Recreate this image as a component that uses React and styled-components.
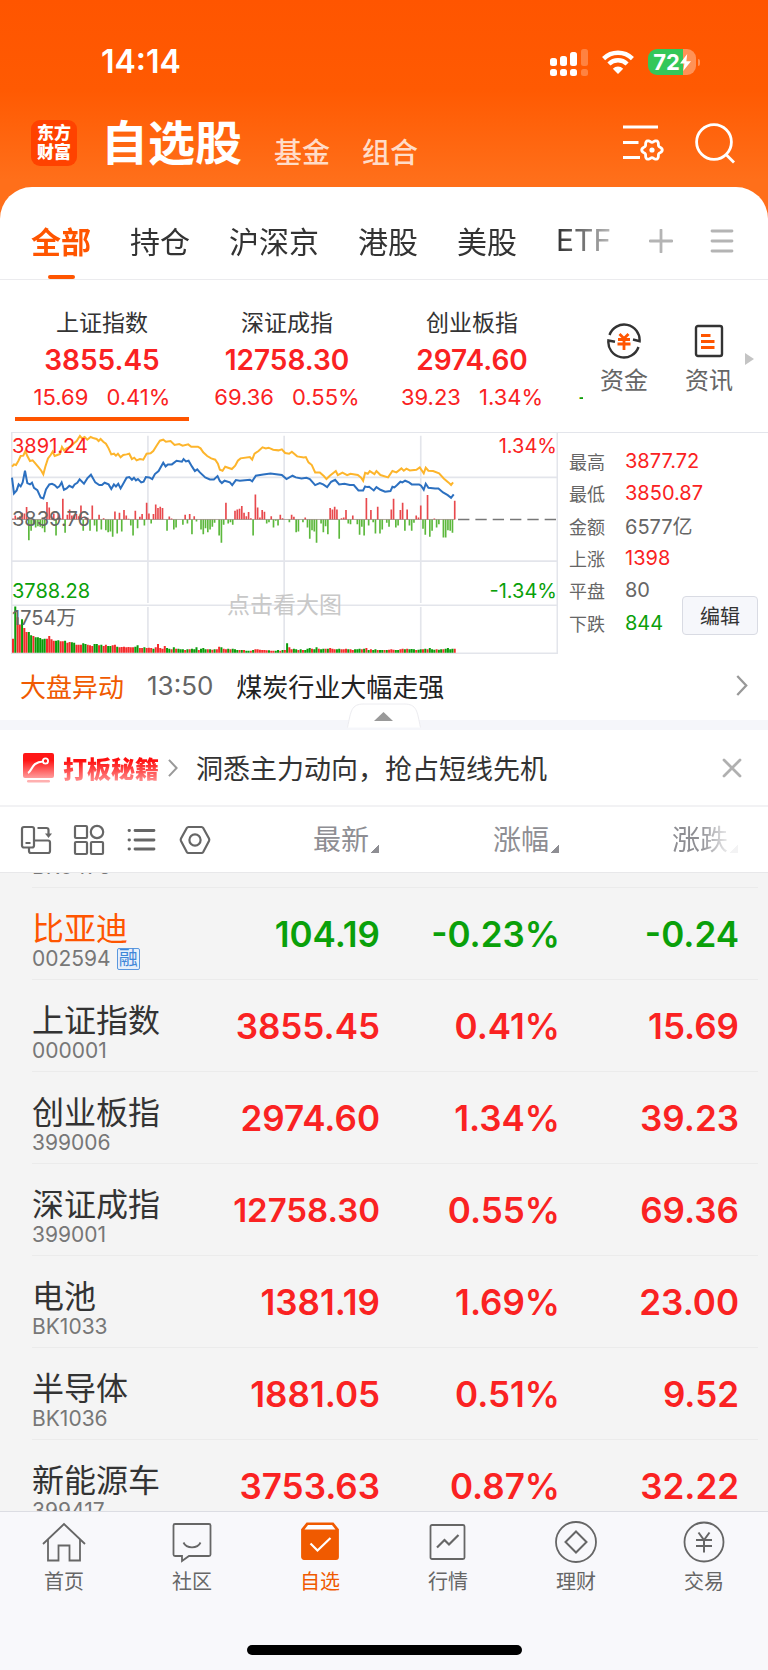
import * as React from 'react';
import styled, { createGlobalStyle, css } from 'styled-components';

const colors = {
    brand: '#ff5500',
    nav: '#f05a00',
    up: '#fa2222',
    down: '#0aa00a',
    text: '#333333',
    grey: '#666666',
    light: '#8e8e93',
    line: '#e3e5eb',
    list: '#f4f4f4',
};

const trendColor = {
    up: colors.up,
    down: colors.down,
    flat: colors.grey,
};

const GlobalStyle = createGlobalStyle`
    * {
        box-sizing: border-box;
    }

    body {
        margin: 0;
        font-family: Inter, 'Noto Sans CJK SC', sans-serif;
        color: ${ colors.text };
    }

    button {
        padding: 0;
        border: 0;
        background: none;
        color: inherit;
        font: inherit;
        cursor: pointer;
    }

    h1, p, ul, dl, dd {
        margin: 0;
        padding: 0;
        list-style: none;
    }

    svg {
        display: block;
        flex: none;
    }
`;

const Screen = styled.div`
    display: flex;
    flex-direction: column;
    height: 100vh;
    background: linear-gradient(#ff5500 0, #ff5a02 90px, #ff6f1a 180px, #ff6f1a 100%);
`;

/* ---------- status bar ---------- */

const StatusBar = styled.div`
    display: flex;
    align-items: center;
    justify-content: space-between;
    padding: 44px 68px 0 101px;
    line-height: 36px;
    font-size: 32px;
    font-weight: 600;
    color: #fff;
`;

const StatusIcons = styled.div`
    display: flex;
    align-items: center;
    gap: 14px;
`;

const SignalIcon = () =>
    <svg width="38" height="27" viewBox="0 0 38 27" fill="#fff">
        <rect x="0" y="9" width="7" height="8" rx="2.5" />
        <rect x="10" y="7" width="7" height="10" rx="2.5" />
        <rect x="20" y="3" width="7" height="14" rx="2.5" />
        <rect x="31" y="0" width="7" height="17" rx="2.5" opacity=".25" />
        <rect x="0" y="20" width="7" height="7" rx="2.5" />
        <rect x="10" y="20" width="7" height="7" rx="2.5" />
        <rect x="20" y="20" width="7" height="7" rx="2.5" />
        <rect x="31" y="20" width="7" height="7" rx="2.5" opacity=".25" />
    </svg>;

const WifiIcon = () =>
    <svg width="32" height="24" viewBox="0 0 32 24" fill="none" stroke="#fff" strokeWidth="4.4">
        <path d="M1.6 8.6a20.6 20.6 0 0 1 28.8 0" />
        <path d="M6.9 14a13 13 0 0 1 18.2 0" />
        <path d="M16 24l-5.2-5.3a7.4 7.4 0 0 1 10.4 0z" fill="#fff" stroke="none" />
    </svg>;

const Battery = styled.div`
    display: flex;
    align-items: center;
    gap: 2px;

    &:after {
        content: '';
        width: 2px;
        height: 7px;
        border-radius: 0 3px 3px 0;
        background: rgba(255, 255, 255, .35);
    }
`;

const BatteryBody = styled.div`
    display: flex;
    align-items: center;
    justify-content: center;
    width: 48px;
    height: 26px;
    border-radius: 9px;
    background: linear-gradient(90deg, #34c759 72%, #ff9257 72%);
    font-size: 22px;
    font-weight: 700;
`;

const BoltIcon = () =>
    <svg width="11" height="17" viewBox="0 0 11 17" fill="#fff">
        <path d="M7.2 0L0 9.4h4.4L3.2 17 11 7.2H6.4z" />
    </svg>;

/* ---------- title bar ---------- */

const TitleBar = styled.header`
    display: flex;
    align-items: center;
    height: 107px;
    padding: 33px 32px 14px 31px;
    color: #fff;
`;

const Logo = styled.div`
    display: grid;
    place-content: center;
    width: 46px;
    height: 46px;
    border-radius: 9px;
    background: #ff4200;
    font-size: 17px;
    font-weight: 900;
    line-height: 19px;
`;

const Sections = styled.nav`
    display: flex;
    flex: 1;
    align-items: flex-end;
    gap: 32px;
    margin-left: 24px;
`;

const SectionTitle = styled.h1`
    font-size: 47px;
    font-weight: 700;
    line-height: 60px;
`;

const SectionLink = styled.button`
    font-size: 28px;
    font-weight: 500;
    line-height: 40px;
    color: #ffdcc8;
`;

const TitleActions = styled.div`
    display: flex;
    align-items: center;
    gap: 31px;
`;

/* wavy outline with six lobes, centred on the lower lines */
const gearPoints = Array.from({ length: 72 }, (_, step) => {
    const angle = step * Math.PI / 36;
    const radius = 9 + 1.3 * Math.cos(6 * angle);
    return `${ (30 + radius * Math.cos(angle)).toFixed(2) },${ (26 + radius * Math.sin(angle)).toFixed(2) }`;
}).join(' ');

const FilterIcon = () =>
    <svg width="42" height="38" viewBox="0 0 42 38" fill="none" stroke="#fff" strokeWidth="2.8">
        <path d="M1 3h35M1 18.500h15.500M1 33.500h17" />
        <polygon points={ gearPoints } />
        <circle cx="30" cy="26" r="2.600" fill="#fff" stroke="none" />
    </svg>;

const SearchIcon = () =>
    <svg width="41" height="41" viewBox="0 0 41 41" fill="none" stroke="#fff" strokeWidth="2.8">
        <circle cx="19" cy="19" r="17.400" />
        <path d="M31 31.500l8 8" />
    </svg>;

/* ---------- watch list tabs ---------- */

const Sheet = styled.main`
    display: flex;
    flex: 1;
    flex-direction: column;
    min-height: 0;
    border-radius: 32px 32px 0 0;
    background: #fff;
    overflow: hidden;
`;

const TabBar = styled.div`
    display: flex;
    align-items: stretch;
    height: 93px;
    border-bottom: 1px solid #ebebee;
    padding: 0 34px 0 31px;
`;

const Tabs = styled.nav`
    display: flex;
    flex: 1;
    gap: 39px;
    min-width: 0;
    overflow: hidden;
    mask-image: linear-gradient(90deg, #000 calc(100% - 64px), rgba(0, 0, 0, .2));
`;

const Tab = styled.button`
    position: relative;
    flex: none;
    padding-top: 13px;
    font-size: 30px;
    white-space: nowrap;

    ${ props => props.$active && css`
        color: ${ colors.brand };
        font-weight: 700;

        &:after {
            content: '';
            position: absolute;
            bottom: 0;
            left: calc(50% - 13px);
            width: 27px;
            height: 4px;
            border-radius: 2px;
            background: ${ colors.brand };
        }
    ` }
`;

const TabActions = styled.div`
    display: flex;
    align-items: center;
    gap: 37px;
    padding: 15px 0 0 27px;
    color: #b4b4b4;
`;

const PlusIcon = () =>
    <svg width="24" height="24" viewBox="0 0 24 24" stroke="currentColor" strokeWidth="2.800" strokeLinecap="round">
        <path d="M12 1v22M1 12h22" />
    </svg>;

const MenuIcon = () =>
    <svg width="24" height="24" viewBox="0 0 24 24" stroke="currentColor" strokeWidth="2.800" strokeLinecap="round">
        <path d="M2 2h20M2 12h20M2 22h20" />
    </svg>;

/* ---------- index cards ---------- */

const IndexBar = styled.section`
    display: flex;
    padding: 0 14px 11px 15px;
`;

const IndexList = styled.div`
    display: grid;
    flex: 1;
    grid-template-columns: repeat(3, 1fr) 13px;
    gap: 11px;
    overflow: hidden;
`;

const IndexCard = styled.button`
    display: flex;
    flex-direction: column;
    align-items: center;
    padding: 28px 0 5px;
    border-bottom: 4px solid ${ props => props.$active ? colors.brand : 'transparent' };
    line-height: 30px;
    white-space: nowrap;
`;

const IndexName = styled.span`
    font-size: 23px;
`;

const IndexValue = styled.span`
    font-size: 28px;
    font-weight: 600;
    line-height: 44px;
    color: ${ props => trendColor[props.$trend] };
`;

const IndexChange = styled.span`
    display: flex;
    gap: 18px;
    font-size: 22px;
    color: ${ props => trendColor[props.$trend] };
`;

const IndexPeek = styled.div`
    align-self: end;
    padding: 0 0 9px 8px;
    overflow: hidden;
    font-size: 22px;
    line-height: 30px;
    color: ${ colors.down };
`;

const Shortcuts = styled.div`
    display: flex;
    align-items: center;
    gap: 15px;
    margin-left: 6px;
`;

const Shortcut = styled.button`
    display: flex;
    flex-direction: column;
    align-items: center;
    gap: 5px;
    width: 70px;
    padding-top: 20px;
    font-size: 24px;
    line-height: 34px;
    color: ${ colors.grey };
`;

const ShortcutArrow = styled.i`
    margin: 16px 0 0 -14px;
    border: solid transparent;
    border-width: 6px 0 6px 9px;
    border-left-color: #c4c4c4;
`;

const FundsIcon = () =>
    <svg width="36" height="36" viewBox="0 0 36 36" fill="none" strokeWidth="2.400">
        <g stroke="#333">
            <path d="M3.500 12A15.500 15.500 0 0 1 33.600 18.200L27 16.500" />
            <path d="M32.500 24A15.500 15.500 0 0 1 2.400 17.500L9 18.800" />
        </g>
        <path d="M13.500 11l4.500 4.500 4.500-4.500M12 16.500h12M11.500 21h13M18 15.500V27" stroke={ colors.brand } strokeWidth="2.800" />
    </svg>;

const NewsIcon = () =>
    <svg width="30" height="36" viewBox="0 0 30 36" fill="none" strokeWidth="2.400">
        <rect x="2" y="3" width="26" height="30" rx="2" stroke="#333" />
        <path d="M7 12.500h9.500M7 18.500h13.500M7 24.500h13.500" stroke={ colors.brand } strokeWidth="2.800" />
    </svg>;

/* ---------- minute chart ---------- */

const ChartPanel = styled.section`
    position: relative;
    display: flex;
    height: 222px;
    margin-left: 11px;
    border-top: 1px solid ${ colors.line };
`;

const ChartArea = styled.div`
    position: relative;
    flex: 1;

    & > svg {
        width: 100%;
        height: 100%;
    }
`;

const ChartLabel = styled.span`
    position: absolute;
    top: ${ props => props.$top }px;
    ${ props => props.$right ? 'right: 1px' : 'left: 1px' };
    font-size: 20px;
    line-height: 24px;
    color: ${ props => props.$color };
`;

const ChartHint = styled(ChartLabel)`
    right: 0;
    left: 0;
    text-align: center;
    font-size: 23px;
`;

const Stats = styled.dl`
    display: grid;
    grid-auto-rows: 1fr;
    width: 210px;
    padding: 12px 0 15px 11px;
`;

const Stat = styled.div`
    display: flex;
    align-items: center;
    gap: 20px;
    color: ${ colors.grey };

    & dt {
        font-size: 18px;
    }

    & dd {
        font-size: 20px;
        color: ${ props => trendColor[props.$trend] };
    }
`;

const EditButton = styled.button`
    position: absolute;
    right: 10px;
    bottom: 19px;
    width: 76px;
    height: 39px;
    border: 1px solid #d9dbe3;
    border-radius: 4px;
    background: #f6f7fb;
    font-size: 20px;
`;

const priceLine = [
    36,158, 42,205, 50,196, 56,178, 62,184, 68,172, 75,137, 82,174, 90,178, 96,173, 102,188, 112,195,
    122,217, 130,220, 138,193, 148,178, 156,176, 164,180, 172,188, 178,184, 185,172, 192,194, 200,190,
    208,182, 218,187, 224,178, 232,173, 239,163, 252,176, 262,160, 273,149, 286,172, 298,180, 306,180,
    314,173, 326,178, 334,192, 342,178, 348,184, 355,176, 362,190, 372,172, 380,158, 388,156, 396,164,
    402,158, 408,166, 414,162, 424,172, 431,170, 438,156, 448,157, 457,162, 465,147, 476,138, 490,113,
    497,124, 504,118, 516,118, 530,107, 546,110, 551,102, 558,109, 566,107, 576,124, 585,138, 592,133,
    600,142, 616,157, 630,163, 642,163, 653,153, 660,168, 666,174, 674,167, 690,172, 697,180, 708,165,
    720,167, 750,164, 757,169, 768,152, 790,148, 812,145, 846,150, 860,162, 878,152, 888,157, 905,160,
    920,158, 930,162, 946,180, 960,174, 970,178, 982,186, 994,170, 1006,164, 1018,178, 1034,176,
    1050,180, 1062,180, 1076,196, 1090,196, 1096,184, 1102,186, 1108,185, 1122,196, 1130,186, 1142,194,
    1156,200, 1172,198, 1178,185, 1184,187, 1192,180, 1202,170, 1208,172, 1216,167, 1228,172, 1236,178,
    1258,178, 1264,182, 1272,194, 1278,176, 1286,188, 1306,190, 1316,190, 1330,202, 1344,210, 1354,218,
    1362,208,
];

const averageLine = [
    36,125, 42,118, 48,120, 55,108, 62,93, 70,92, 76,78, 82,93, 90,108, 98,106, 106,115, 116,127,
    124,137, 130,148, 136,125, 144,100, 152,90, 158,80, 164,93, 172,90, 180,87, 186,66, 192,76, 200,70,
    212,65, 222,55, 230,48, 240,33, 246,40, 254,36, 262,44, 272,36, 282,40, 290,42, 296,48, 302,42,
    310,50, 318,56, 326,70, 334,88, 342,86, 348,92, 354,86, 362,97, 370,90, 380,88, 388,86, 396,102,
    403,98, 410,106, 420,102, 430,104, 440,86, 452,85, 460,78, 470,62, 480,47, 490,44, 498,50, 512,48,
    524,60, 538,57, 548,62, 565,58, 574,65, 594,65, 602,70, 610,82, 622,93, 634,100, 646,104, 654,116,
    660,134, 668,137, 676,125, 696,132, 706,122, 714,107, 722,100, 750,96, 757,104, 764,86, 776,78,
    788,67, 798,70, 806,68, 820,74, 836,76, 846,73, 856,84, 868,86, 876,80, 892,94, 912,97, 918,96,
    926,112, 936,120, 946,142, 960,142, 972,153, 980,162, 990,152, 1008,138, 1014,150, 1028,143,
    1042,150, 1052,146, 1074,150, 1084,158, 1090,167, 1096,143, 1104,146, 1110,138, 1124,147, 1130,138,
    1142,150, 1165,157, 1178,138, 1190,142, 1205,130, 1212,137, 1220,131, 1230,136, 1250,134, 1260,127,
    1272,145, 1278,128, 1286,137, 1300,138, 1318,145, 1332,160, 1346,172, 1354,180, 1360,172,
];

/* one value a minute, positive is drawn above the base line in red */
const flow = [
    3, 12, 2, 10, 20, 18, 37, -62, -34, -14, -24, -20, -22, -26, -38, 52, 36, 10, 18, -48,
    18, 4, 62, -40, 14, 30, 12, 14, 16, 10, 42, -34, 6, 5, -34, 42, -18, -36, 14, -30,
    4, -32, -38, -36, -52, 24, -42, 20, -36, 28, 12, 2, -18, -48, 26, -26, 8, 16, -18, 50,
    18, -12, 16, 45, 34, 38, 34, 0, -34, 9, 3, -30, -24, 0, 0, -16, 14, -12, 16, -44,
    10, -6, 0, -30, -44, -26, -38, -30, -22, -10, 0, -48, -70, -16, 50, -12, -8, -16, 26, 30,
    32, 40, 20, 10, 22, 4, -48, 75, 36, 6, 28, 23, -12, -8, 10, -24, -4, -18, 14, 4,
    0, 0, -8, 14, 8, -38, -36, 0, -8, 6, -24, -58, -32, -36, -70, 0, -12, -38, -20, -44,
    34, 30, 38, 30, -58, 4, 6, 28, -12, -14, 12, 0, -14, -46, -22, -48, 64, -18, 28, -8,
    -42, 38, -42, -30, 0, -10, -22, 30, 62, -24, -18, 28, 50, -34, 30, -18, -34, -10, 12, 6,
    42, -28, -46, 73, -52, -34, 3, -24, -14, 0, -54, -54, -32, -34, -40, 56,
];

const volume = [
    42, -138, 106, 84, -100, 74, 62, -62, -52, 50, -46, -46, -44, -40, -42, 42, 50, 40, 36, -36,
    -37, 34, 34, -36, 30, 32, -31, -30, 24, 24, 24, -28, -26, 24, 22, 20, -26, -26, 22, -24,
    20, 24, -20, -20, 22, 24, -18, 16, 17, 18, 16, 17, 16, 16, -18, -22, 14, 14, -16, 14,
    15, 14, -12, 16, 26, 14, 12, 20, -14, -12, 10, -16, 12, -12, -10, -10, 8, -10, 10, -12,
    -10, -16, 8, -12, -14, -10, 10, -10, 9, -10, 10, 18, -16, 12, 10, -12, 10, -12, -10, -8,
    8, -8, 8, -6, -6, 6, -8, 10, 10, 9, 8, 8, 7, -7, 6, 6, -6, -8, 6, -8,
    8, -28, 16, 10, -12, -10, 8, -10, 8, -8, -12, -14, 12, -10, -16, 12, -10, -12, 12, -12,
    14, 12, 10, -10, -12, 10, 10, 12, -10, 10, 8, -10, -10, -12, 10, -12, 14, -8, 10, -8,
    -10, 8, -8, -8, 8, -8, 9, 10, 9, -8, -8, 10, 12, -10, 12, -10, -11, -10, 8, -9,
    -10, 10, -12, 10, -14, -10, -9, 10, -9, -10, 10, -12, -14, -10, -12, 12,
];

const barX = index => 37 + index * 6.8;

const toBars = (values, base, withSign) => values.map((value, index) =>
    `M${ barX(index) + 2 } ${ base }v${ withSign ? -value : -Math.abs(value) }`
);

const pick = (bars, values, positive) => bars.filter((bar, index) => values[index] > 0 === positive).join('');

const flowBars = toBars(flow, 283, true);
const volumeBars = toBars(volume, 682, false);

const MinuteChart = () =>
    <svg viewBox="33 24 1642 662" preserveAspectRatio="none" fill="none" role="img" aria-label="上证指数分时图">
        <g stroke={ colors.line } strokeWidth="5">
            <path d="M35 24V686M1673 24V686M444 32V533M853 32V533M1263 32V533M444 545V684M853 545V684M1263 545V684" />
            <path d="M33 157H1675M33 408H1675M33 540H1675M33 684H1675" />
        </g>
        <path d={ pick(flowBars, flow, true) } stroke="#e8494d" strokeWidth="5" />
        <path d={ pick(flowBars, flow, false) } stroke="#5cb83c" strokeWidth="5" />
        <path d="M36 283H1365" stroke="#8a7a70" strokeWidth="2" />
        <path d="M1375 283H1675" stroke="#777" strokeWidth="4" strokeDasharray="34 18" />
        <path d={ pick(volumeBars, volume, true) } stroke="#f42c2c" strokeWidth="6" />
        <path d={ pick(volumeBars, volume, false) } stroke="#0a9c0a" strokeWidth="6" />
        <polyline points={ averageLine.join(' ') } stroke="#fdb52c" strokeWidth="6" />
        <polyline points={ priceLine.join(' ') } stroke="#2c70c0" strokeWidth="6" />
    </svg>;

/* ---------- market news and promo ---------- */

const NewsRow = styled.a`
    display: flex;
    align-items: center;
    gap: 23px;
    height: 66px;
    padding: 0 20px 4px;
    font-size: 26px;
    color: #222;
    text-decoration: none;

    & svg {
        margin-left: auto;
    }
`;

const NewsTag = styled.span`
    color: ${ colors.nav };
`;

const NewsTime = styled.time`
    color: ${ colors.grey };
`;

const ChevronIcon = ({ width, height, color }) =>
    <svg width={ width } height={ height } viewBox="0 0 11 20" fill="none" stroke={ color } strokeWidth="2.200">
        <path d="M1 1L9.500 10 1 19" />
    </svg>;

const Divider = styled.div`
    position: relative;
    height: 10px;
    background: #f5f6fa;
`;

const CollapseButton = styled.button`
    position: absolute;
    bottom: 2px;
    left: calc(50% - 37px);
`;

const CollapseIcon = () =>
    <svg width="74" height="25" viewBox="0 0 74 25">
        <path d="M.500 24.500C4 8 4 1 17 1H57C70 1 70 8 73.500 24.500" fill="#fff" stroke="#ececf0" />
        <path d="M27 18L36.500 9 46 18Z" fill="#999" />
    </svg>;

const Promo = styled.div`
    display: flex;
    align-items: center;
    height: 77px;
    padding: 0 26px 0 23px;
    border-bottom: 2px solid #f2f2f4;
`;

const PromoLink = styled.a`
    display: flex;
    flex: 1;
    align-items: center;
    gap: 9px;
    color: ${ colors.text };
    text-decoration: none;
`;

const PromoTitle = styled.strong`
    background: linear-gradient(#ff0f0f 30%, #ff8585 85%);
    background-clip: text;
    color: transparent;
    font-size: 24px;
    font-weight: 900;
`;

const PromoText = styled.span`
    margin-left: 9px;
    font-size: 27px;
`;

const PromoIcon = () =>
    <svg width="31" height="30" viewBox="0 0 31 30" fill="none">
        <defs>
            <linearGradient id="promo" x2="0" y2="1">
                <stop offset=".3" stopColor="#ff1616" />
                <stop offset="1" stopColor="#ff9c9c" />
            </linearGradient>
        </defs>
        <rect width="31" height="25" rx="2" fill="url(#promo)" />
        <path d="M5 20C9.500 18 8 9 20.500 8.500" stroke="#fff" strokeWidth="2.200" />
        <circle cx="22.500" cy="8" r="2.600" stroke="#fff" strokeWidth="1.800" />
        <rect x="4" y="27" width="23" height="2.600" rx="1.300" fill="#ffb0b0" />
    </svg>;

const CloseIcon = () =>
    <svg width="20" height="20" viewBox="0 0 20 20" stroke="#b0b0b0" strokeWidth="2.800" strokeLinecap="round">
        <path d="M2 2l16 16M18 2L2 18" />
    </svg>;

/* ---------- quotes ---------- */

const quoteColumns = css`
    display: grid;
    grid-template-columns: minmax(0, 1fr) 150px 180px 179px;
    align-items: center;
`;

const QuoteHead = styled.div`
    ${ quoteColumns }
    height: 66px;
    padding: 0 30px 0 20px;
    border-bottom: 1px solid #e8e8ea;
`;

const ViewButtons = styled.div`
    display: flex;
    gap: 20px;
    color: ${ colors.grey };
`;

const SortButton = styled.button`
    display: flex;
    align-items: flex-end;
    justify-content: flex-end;
    gap: 2px;
    font-size: 28px;
    line-height: 40px;
    color: ${ colors.light };
    ${ props => props.$faded && 'mask-image: linear-gradient(90deg, #000 calc(100% - 38px), rgba(0, 0, 0, .1) calc(100% - 8px));' }

    &:after {
        content: '';
        width: 8px;
        height: 8px;
        margin-bottom: 7px;
        background: linear-gradient(135deg, transparent 50%, ${ colors.light } 50%);
    }
`;

const iconProps = {
    width: 33,
    height: 33,
    viewBox: '0 0 33 33',
    fill: 'none',
    stroke: 'currentColor',
    strokeWidth: 2.2,
};

const RotateIcon = () =>
    <svg { ...iconProps }>
        <path d="M9 24.500v3.500a2 2 0 0 0 2 2H28a2 2 0 0 0 2-2V19.500a2 2 0 0 0-2-2H15" />
        <rect x="2" y="4" width="12" height="20.500" rx="2" fill="#fff" />
        <path d="M5.500 20h5M17.500 5h9a2 2 0 0 1 2 2v5.500" />
        <path d="M25 10.500h7l-3.500 4.500z" fill="currentColor" stroke="none" />
    </svg>;

const GridIcon = () =>
    <svg { ...iconProps }>
        <rect x="2" y="3" width="12" height="12" rx="1" />
        <rect x="2" y="19" width="12" height="12" rx="1" />
        <rect x="18" y="19" width="12" height="12" rx="1" />
        <circle cx="24" cy="9" r="6.200" />
    </svg>;

const ListIcon = () =>
    <svg { ...iconProps } strokeWidth="2.800" strokeLinecap="round">
        <path d="M9 7.500H28M9 17H28M9 26H28M3 7.500h.5M3 17h.5M3 26h.5" />
    </svg>;

const HexIcon = () =>
    <svg { ...iconProps } strokeLinejoin="round">
        <path d="M9.500 4H22.500a2 2 0 0 1 1.700 1L30 15.500a3 3 0 0 1 0 2.500L24.200 29a2 2 0 0 1-1.700 1H9.500a2 2 0 0 1-1.700-1L2 18a3 3 0 0 1 0-2.500L7.800 5A2 2 0 0 1 9.500 4Z" />
        <circle cx="16" cy="17" r="5.600" />
    </svg>;

const QuoteList = styled.ul`
    flex: 1;
    min-height: 0;
    padding: 0 10px 0 32px;
    background: ${ colors.list };
    overflow-y: auto;
    scrollbar-width: none;
`;

const QuoteRow = styled.li`
    ${ quoteColumns }
    height: 92px;
    padding-right: 19px;
    border-bottom: 1px solid #ebebeb;
`;

const Stock = styled.div`
    padding-top: 15px;
    white-space: nowrap;
`;

const StockName = styled.p`
    font-size: 32px;
    line-height: 36px;
    color: ${ props => props.$held ? colors.brand : colors.text };
`;

const StockCode = styled.p`
    display: flex;
    align-items: center;
    gap: 6px;
    font-size: 21px;
    line-height: 24px;
    color: #777;
`;

const MarginTag = styled.span`
    padding: 0 1px;
    border: 1px solid #5a97de;
    border-radius: 2px;
    background: #e6f0fb;
    color: #3f86d8;
    font-size: 19px;
    line-height: 20px;
`;

/* long figures step down a size so they stay in their column */
const Figure = styled.span`
    text-align: right;
    font-size: ${ props => props.$long ? 33 : 35 }px;
    font-weight: 600;
    color: ${ props => trendColor[props.$trend] };
`;

/* ---------- bottom navigation ---------- */

const BottomBar = styled.footer`
    display: flex;
    flex-direction: column;
    justify-content: space-between;
    align-items: center;
    height: 159px;
    padding: 9px 0 15px;
    border-top: 1px solid #dcdde3;
    background: #f8f8fb;
`;

const BottomNav = styled.nav`
    display: grid;
    grid-template-columns: repeat(6, 1fr);
    width: 100%;
`;

const NavLink = styled.a`
    display: flex;
    flex-direction: column;
    align-items: center;
    gap: 7px;
    font-size: 20px;
    line-height: 24px;
    color: ${ props => props.$active ? colors.nav : colors.grey };
    text-decoration: none;
`;

const HomeIndicator = styled.div`
    width: 275px;
    height: 10px;
    border-radius: 5px;
    background: #000;
`;

const NavIcon = ({ children }) =>
    <svg width="44" height="42" viewBox="0 0 44 42" fill="none" stroke="currentColor" strokeWidth="1.800">
        { children }
    </svg>;

const navItems = [
    {
        label: '首页',
        icon: <path d="M1 23L22 3l21 20M6 18.500V39.500H16.500V24.500H27.500V39.500H38V18.500" />,
    },
    {
        label: '社区',
        icon: <path d="M5 3H39a1.500 1.500 0 0 1 1.500 1.500V33.500A1.500 1.500 0 0 1 39 35H19l-7 5V35H5a1.500 1.500 0 0 1-1.500-1.500V4.500A1.500 1.500 0 0 1 5 3ZM13.500 21.500C16.500 28 27.500 28 30.500 21.500" />,
    },
    {
        label: '自选',
        active: true,
        icon: <>
            <path d="M9 2.500H35L40 8.500V36a2 2 0 0 1-2 2H6a2 2 0 0 1-2-2V8.500Z" fill="currentColor" />
            <path d="M10 4H34L37.500 8.500H6.500Z" fill="#fff" stroke="none" />
            <path d="M12.500 22.500l7 7L32.500 17" stroke="#fff" strokeWidth="2.200" />
        </>,
    },
    {
        label: '行情',
        icon: <>
            <rect x="4.500" y="4" width="34" height="34" rx="1.500" />
            <path d="M11 26.500l7.500-7.500 4.500 4.500L32.500 14" strokeWidth="2.200" />
        </>,
    },
    {
        label: '理财',
        icon: <>
            <circle cx="22" cy="21" r="20" />
            <path d="M22 10.500L32.500 21 22 31.500 11.500 21Z" strokeWidth="2" />
        </>,
    },
    {
        label: '交易',
        icon: <>
            <circle cx="22" cy="21" r="19.500" />
            <path d="M16.500 11.500L22 19l5.500-7.500M14 19H30M14 25H30M22 19V31.500" strokeWidth="2" />
        </>,
    },
];

/* ---------- data ---------- */

const tabs = ['全部', '持仓', '沪深京', '港股', '美股', 'ETF'];

const indices = [
    { name: '上证指数', value: '3855.45', change: '15.69', percent: '0.41%' },
    { name: '深证成指', value: '12758.30', change: '69.36', percent: '0.55%' },
    { name: '创业板指', value: '2974.60', change: '39.23', percent: '1.34%' },
];

const stats = [
    { label: '最高', value: '3877.72', trend: 'up' },
    { label: '最低', value: '3850.87', trend: 'up' },
    { label: '金额', value: '6577亿', trend: 'flat' },
    { label: '上涨', value: '1398', trend: 'up' },
    { label: '平盘', value: '80', trend: 'flat' },
    { label: '下跌', value: '844', trend: 'down' },
];

const quotes = [
    { name: '银行', code: 'BK0475' },
    { name: '比亚迪', code: '002594', last: '104.19', percent: '-0.23%', change: '-0.24', held: true, margin: true },
    { name: '上证指数', code: '000001', last: '3855.45', percent: '0.41%', change: '15.69' },
    { name: '创业板指', code: '399006', last: '2974.60', percent: '1.34%', change: '39.23' },
    { name: '深证成指', code: '399001', last: '12758.30', percent: '0.55%', change: '69.36' },
    { name: '电池', code: 'BK1033', last: '1381.19', percent: '1.69%', change: '23.00' },
    { name: '半导体', code: 'BK1036', last: '1881.05', percent: '0.51%', change: '9.52' },
    { name: '新能源车', code: '399417', last: '3753.63', percent: '0.87%', change: '32.22' },
];

const LIST_OFFSET = 77;

const Quotes = () => {
    const list = React.useRef(null);

    React.useLayoutEffect(() => {
        list.current.scrollTop = LIST_OFFSET;
    }, []);

    return (
        <QuoteList ref={ list }>
            { quotes.map(({ name, code, last = '', percent, change = '', held, margin }) => {
                const trend = change.startsWith('-') ? 'down' : 'up';
                return (
                    <QuoteRow key={ code }>
                        <Stock>
                            <StockName $held={ held }>{ name }</StockName>
                            <StockCode>
                                { code }
                                { margin && <MarginTag>融</MarginTag> }
                            </StockCode>
                        </Stock>
                        <Figure $trend={ trend } $long={ last.length > 7 }>{ last }</Figure>
                        <Figure $trend={ trend }>{ percent }</Figure>
                        <Figure $trend={ trend }>{ change }</Figure>
                    </QuoteRow>
                );
            }) }
        </QuoteList>
    );
};

export default function App() {
    const [tab, setTab] = React.useState(tabs[0]);
    const [index, setIndex] = React.useState(indices[0].name);

    return (
        <Screen>
            <GlobalStyle />
            <StatusBar>
                <span>14:14</span>
                <StatusIcons>
                    <SignalIcon />
                    <WifiIcon />
                    <Battery>
                        <BatteryBody>72<BoltIcon /></BatteryBody>
                    </Battery>
                </StatusIcons>
            </StatusBar>
            <TitleBar>
                <Logo><span>东方</span><span>财富</span></Logo>
                <Sections>
                    <SectionTitle>自选股</SectionTitle>
                    <SectionLink>基金</SectionLink>
                    <SectionLink>组合</SectionLink>
                </Sections>
                <TitleActions>
                    <button aria-label="设置"><FilterIcon /></button>
                    <button aria-label="搜索"><SearchIcon /></button>
                </TitleActions>
            </TitleBar>
            <Sheet>
                <TabBar>
                    <Tabs>
                        { tabs.map(name =>
                            <Tab key={ name } $active={ name === tab } onClick={ () => setTab(name) }>{ name }</Tab>
                        ) }
                    </Tabs>
                    <TabActions>
                        <button aria-label="添加"><PlusIcon /></button>
                        <button aria-label="分组"><MenuIcon /></button>
                    </TabActions>
                </TabBar>
                <IndexBar>
                    <IndexList>
                        { indices.map(({ name, value, change, percent }) =>
                            <IndexCard key={ name } $active={ name === index } onClick={ () => setIndex(name) }>
                                <IndexName>{ name }</IndexName>
                                <IndexValue $trend="up">{ value }</IndexValue>
                                <IndexChange $trend="up">
                                    <span>{ change }</span>
                                    <span>{ percent }</span>
                                </IndexChange>
                            </IndexCard>
                        ) }
                        <IndexPeek>-</IndexPeek>
                    </IndexList>
                    <Shortcuts>
                        <Shortcut><FundsIcon />资金</Shortcut>
                        <Shortcut><NewsIcon />资讯</Shortcut>
                        <ShortcutArrow />
                    </Shortcuts>
                </IndexBar>
                <ChartPanel>
                    <ChartArea>
                        <MinuteChart />
                        <ChartLabel $top={ 1 } $color={ colors.up }>3891.24</ChartLabel>
                        <ChartLabel $top={ 1 } $color={ colors.up } $right>1.34%</ChartLabel>
                        <ChartLabel $top={ 74 } $color={ colors.grey }>3839.76</ChartLabel>
                        <ChartLabel $top={ 146 } $color={ colors.down }>3788.28</ChartLabel>
                        <ChartLabel $top={ 146 } $color={ colors.down } $right>-1.34%</ChartLabel>
                        <ChartLabel $top={ 173 } $color={ colors.grey }>1754万</ChartLabel>
                        <ChartHint $top={ 160 } $color="#c8c8c8">点击看大图</ChartHint>
                    </ChartArea>
                    <Stats>
                        { stats.map(({ label, value, trend }) =>
                            <Stat key={ label } $trend={ trend }>
                                <dt>{ label }</dt>
                                <dd>{ value }</dd>
                            </Stat>
                        ) }
                    </Stats>
                    <EditButton>编辑</EditButton>
                </ChartPanel>
                <NewsRow href="#news">
                    <NewsTag>大盘异动</NewsTag>
                    <NewsTime>13:50</NewsTime>
                    <span>煤炭行业大幅走强</span>
                    <ChevronIcon width="12" height="21" color="#999" />
                </NewsRow>
                <Divider>
                    <CollapseButton aria-label="收起"><CollapseIcon /></CollapseButton>
                </Divider>
                <Promo>
                    <PromoLink href="#promo">
                        <PromoIcon />
                        <PromoTitle>打板秘籍</PromoTitle>
                        <ChevronIcon width="10" height="18" color="#999" />
                        <PromoText>洞悉主力动向，抢占短线先机</PromoText>
                    </PromoLink>
                    <button aria-label="关闭"><CloseIcon /></button>
                </Promo>
                <QuoteHead>
                    <ViewButtons>
                        <button aria-label="横屏"><RotateIcon /></button>
                        <button aria-label="宫格"><GridIcon /></button>
                        <button aria-label="列表"><ListIcon /></button>
                        <button aria-label="指标"><HexIcon /></button>
                    </ViewButtons>
                    <SortButton>最新</SortButton>
                    <SortButton>涨幅</SortButton>
                    <SortButton $faded>涨跌</SortButton>
                </QuoteHead>
                <Quotes />
            </Sheet>
            <BottomBar>
                <BottomNav>
                    { navItems.map(({ label, icon, active }) =>
                        <NavLink key={ label } href={ `#${ label }` } $active={ active }>
                            <NavIcon>{ icon }</NavIcon>
                            { label }
                        </NavLink>
                    ) }
                </BottomNav>
                <HomeIndicator />
            </BottomBar>
        </Screen>
    );
}
